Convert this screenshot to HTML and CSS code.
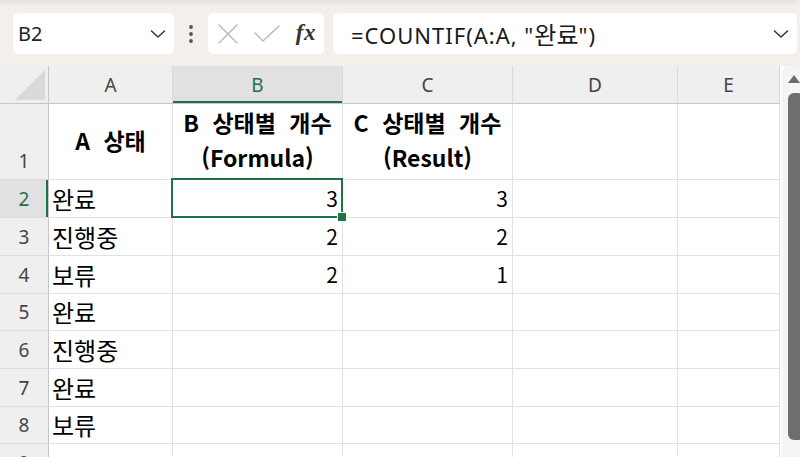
FILE: index.html
```html
<!DOCTYPE html>
<html lang="ko">
<head>
<meta charset="utf-8">
<link rel="stylesheet" href="styles.css">
</head>
<body>
<div class="app">
  <div class="topcard"></div>
  <div class="fbar">
    <div class="namebox">
      <span class="nb-text">B2</span>
      <svg class="chev" width="16" height="10" viewBox="0 0 16 10"><path d="M1.5 2 L8 8 L14.5 2" fill="none" stroke="#333" stroke-width="1.5" stroke-linecap="round" stroke-linejoin="round"/></svg>
    </div>
    <div class="dots">
      <svg width="6" height="20" viewBox="0 0 6 20"><circle cx="3" cy="3" r="1.9" fill="#555"/><circle cx="3" cy="10" r="1.9" fill="#555"/><circle cx="3" cy="17" r="1.9" fill="#555"/></svg>
    </div>
    <div class="fxbox">
      <svg class="ico" width="22" height="22" viewBox="0 0 22 22"><path d="M2 2 L20 20 M20 2 L2 20" stroke="#bdbdbd" stroke-width="1.6" stroke-linecap="round"/></svg>
      <svg class="ico" width="28" height="20" viewBox="0 0 28 20"><path d="M2 9 L10 17 L26 2" fill="none" stroke="#bdbdbd" stroke-width="1.6" stroke-linecap="round" stroke-linejoin="round"/></svg>
      <span class="fx">fx</span>
    </div>
    <div class="formula">
      <span class="f-text">=COUNTIF(A:A, "<span class="fk">완료</span>")</span>
      <svg class="chev" width="16" height="10" viewBox="0 0 16 10"><path d="M1.5 2 L8 8 L14.5 2" fill="none" stroke="#333" stroke-width="1.5" stroke-linecap="round" stroke-linejoin="round"/></svg>
    </div>
  </div>
  <div class="sheetwrap">
    <div class="grid">
      <div class="ch corner"><div class="tri"></div></div>
      <div class="ch">A</div>
      <div class="ch sel">B</div>
      <div class="ch">C</div>
      <div class="ch">D</div>
      <div class="ch">E</div>

      <div class="rh">1</div>
      <div class="c hd single">A 상태</div>
      <div class="c hd">B 상태별 개수<br>(Formula)</div>
      <div class="c hd">C 상태별 개수<br>(Result)</div>
      <div class="c"></div>
      <div class="c"></div>

      <div class="rh sel">2</div>
      <div class="c">완료</div>
      <div class="c num active">3</div>
      <div class="c num">3</div>
      <div class="c"></div>
      <div class="c"></div>

      <div class="rh">3</div>
      <div class="c">진행중</div>
      <div class="c num">2</div>
      <div class="c num">2</div>
      <div class="c"></div>
      <div class="c"></div>

      <div class="rh">4</div>
      <div class="c">보류</div>
      <div class="c num">2</div>
      <div class="c num">1</div>
      <div class="c"></div>
      <div class="c"></div>

      <div class="rh">5</div>
      <div class="c">완료</div>
      <div class="c"></div>
      <div class="c"></div>
      <div class="c"></div>
      <div class="c"></div>

      <div class="rh">6</div>
      <div class="c">진행중</div>
      <div class="c"></div>
      <div class="c"></div>
      <div class="c"></div>
      <div class="c"></div>

      <div class="rh">7</div>
      <div class="c">완료</div>
      <div class="c"></div>
      <div class="c"></div>
      <div class="c"></div>
      <div class="c"></div>

      <div class="rh">8</div>
      <div class="c">보류</div>
      <div class="c"></div>
      <div class="c"></div>
      <div class="c"></div>
      <div class="c"></div>

      <div class="rh last">9</div>
      <div class="c"></div>
      <div class="c"></div>
      <div class="c"></div>
      <div class="c"></div>
      <div class="c"></div>
    </div>
    <div class="vscroll">
      <div class="track">
        <div class="arrow"></div>
        <div class="thumb"></div>
      </div>
    </div>
  </div>
</div>
</body>
</html>
```

FILE: styles.css
```css
* { box-sizing: border-box; }
html, body { margin: 0; padding: 0; }
body {
  width: 800px;
  height: 457px;
  overflow: hidden;
  background: #f3efeb;
  font-family: "Noto Sans", "Noto Sans CJK KR", sans-serif;
}
.app { width: 800px; height: 457px; overflow: hidden; }

.topcard {
  height: 0;
  margin-right: 6px;
  box-shadow: 0 0 5px 2px rgba(0, 0, 0, 0.10);
}

.fbar {
  height: 66px;
  display: flex;
  align-items: flex-start;
  padding: 13px 0 0 13px;
}
.namebox, .fxbox, .formula {
  height: 41px;
  background: #fff;
  border-radius: 5px;
  display: flex;
  align-items: center;
}
.namebox {
  width: 161px;
  padding: 0 8px 0 5px;
  justify-content: space-between;
}
.nb-text { font-size: 20px; color: #222; }
.dots {
  width: 34px;
  height: 41px;
  display: flex;
  align-items: center;
  justify-content: center;
}
.fxbox {
  width: 116px;
  padding: 0 8px 0 9px;
  justify-content: space-between;
}
.fx {
  font-family: "Liberation Serif", "DejaVu Serif", serif;
  font-style: italic;
  font-weight: 700;
  font-size: 23px;
  color: #333;
  letter-spacing: 0.5px;
  padding-bottom: 2px;
}
.formula {
  width: 464px;
  margin-left: 9px;
  padding: 0 8px 0 18px;
  justify-content: space-between;
}
.f-text { font-size: 22px; letter-spacing: 1px; color: #1a1a1a; white-space: nowrap; }
.fk { font-family: "Noto Sans CJK KR", sans-serif; font-size: 24px; letter-spacing: 0; }

.sheetwrap { display: flex; height: 391px; }
.grid {
  display: grid;
  grid-template-columns: 49px 124px 170px 170px 165px 102px;
  grid-template-rows: 38px 76px 38px 38px 38px 37px 38px 38px 37px 38px;
  width: 780px;
  background: #fff;
  font-family: "Noto Sans CJK KR", "Noto Sans", sans-serif;
}
.ch {
  background: #efefef;
  border-right: 1px solid #d9d9d9;
  border-bottom: 1px solid #c6c6c6;
  display: flex;
  align-items: center;
  justify-content: center;
  font-family: "Noto Sans", "Open Sans", sans-serif;
  font-size: 19px;
  color: #454545;
}
.ch.sel {
  background: #e1e1e1;
  color: #1e7145;
  box-shadow: inset 0 -2px 0 #1e7145;
}
.corner {
  align-items: flex-end;
  justify-content: flex-end;
  padding: 0 3px 3px 0;
  border-right-color: #c6c6c6;
}
.tri {
  width: 30px;
  height: 30px;
  background: #d9d9d9;
  clip-path: polygon(100% 0, 100% 100%, 0 100%);
}
.rh {
  background: #efefef;
  border-right: 1px solid #c6c6c6;
  border-bottom: 1px solid #dcdcdc;
  display: flex;
  align-items: flex-end;
  justify-content: center;
  padding-bottom: 6px;
  font-family: "Noto Sans", "Open Sans", sans-serif;
  font-size: 19px;
  line-height: 24px;
  color: #454545;
}
.rh.last { overflow: hidden; }
.rh.sel {
  background: #e1e1e1;
  color: #1e7145;
  box-shadow: inset -2px 0 0 #1e7145;
}
.c {
  border-right: 1px solid #e1e1e1;
  border-bottom: 1px solid #e1e1e1;
  display: flex;
  align-items: center;
  padding: 0 4px 1px 3px;
  font-size: 24px;
  color: #000;
  position: relative;
  white-space: nowrap;
}
.c.num { justify-content: flex-end; font-size: 21px; }
.c.hd {
  font-weight: 700;
  font-size: 23px;
  text-align: center;
  justify-content: center;
  line-height: 35px;
  word-spacing: 7px;
  padding: 0 0 3px 0;
}
.c.active::after {
  content: "";
  position: absolute;
  top: -2px;
  left: -2px;
  right: -1px;
  bottom: -1px;
  border: 2px solid #217346;
  pointer-events: none;
}
.c.active::before {
  content: "";
  position: absolute;
  right: -5px;
  bottom: -5px;
  width: 8px;
  height: 8px;
  background: #217346;
  border: 1px solid #fff;
  z-index: 2;
}

.vscroll {
  width: 20px;
  padding-left: 2px;
  background: #fff;
}
.track {
  height: 100%;
  background: #f4f4f4;
  border-top-left-radius: 7px;
  padding: 9px 0 0 6px;
  overflow: hidden;
}
.arrow {
  width: 0;
  height: 0;
  border-left: 6px solid transparent;
  border-right: 6px solid transparent;
  border-bottom: 8px solid #6c6c6c;
}
.thumb {
  margin-top: 10px;
  width: 16px;
  height: 347px;
  background: #6e6e6e;
  border-radius: 6px;
}
```
